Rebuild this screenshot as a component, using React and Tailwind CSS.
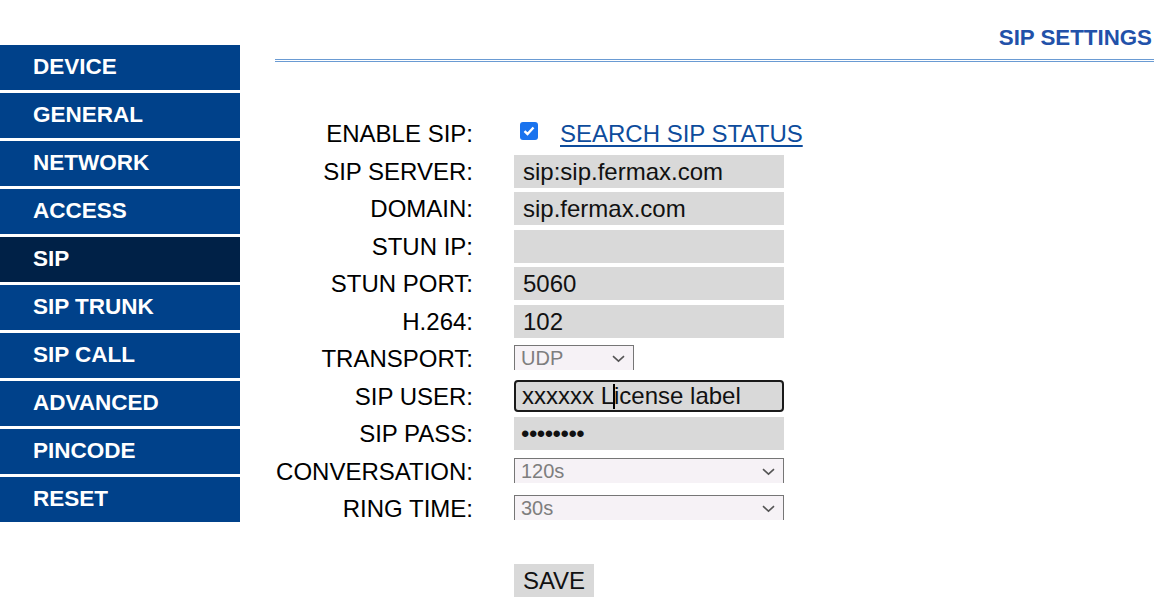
import React from "react";

const NAV = ["DEVICE", "GENERAL", "NETWORK", "ACCESS", "SIP", "SIP TRUNK", "SIP CALL", "ADVANCED", "PINCODE", "RESET"];

function Chevron() {
  return (
    <svg width="13" height="8" viewBox="0 0 13 8" className="absolute right-[8px] top-[9px]">
      <path d="M1 1.2 L6.5 6.2 L12 1.2" fill="none" stroke="#555" strokeWidth="1.6" />
    </svg>
  );
}

function FakeSelect({ value, w }) {
  return (
    <div className={`relative ${w} h-[25px] mt-[5px] self-start border-t border-l border-r border-[#767676] bg-[#f6f2f6] text-[#7e7e7e] text-[20px] leading-[24px] pl-[6px]`}>
      {value}
      <Chevron />
    </div>
  );
}

function Input({ value }) {
  return (
    <div className="w-[270px] h-[33px] bg-[#d9d9d9] text-[24px] leading-[33px] pl-[9px] text-[#111]">{value}</div>
  );
}

function Label({ children }) {
  return <div className="text-right text-[24px] leading-[27px] text-black whitespace-nowrap">{children}</div>;
}

export default function App() {
  const rows = [
    ["SIP SERVER:", <Input value="sip:sip.fermax.com" />],
    ["DOMAIN:", <Input value="sip.fermax.com" />],
    ["STUN IP:", <Input value="" />],
    ["STUN PORT:", <Input value="5060" />],
    ["H.264:", <Input value="102" />],
    ["TRANSPORT:", <FakeSelect value="UDP" w="w-[120px]" />],
    [
      "SIP USER:",
      <div className="w-[270px] h-[32px] bg-[#d9d9d9] border-2 border-[#1a1a1a] rounded-[4px] text-[24px] leading-[28px] pl-[6px] text-[#111] whitespace-nowrap">
        xxxxxx L<span className="inline-block w-[2px] h-[25px] bg-black align-middle mx-[-1px] relative top-[-1px]"></span>icense label
      </div>,
    ],
    [
      "SIP PASS:",
      <div className="w-[270px] h-[33px] bg-[#d9d9d9] text-[24px] leading-[33px] pl-[7px] text-[#111] tracking-[-0.5px]">••••••••</div>,
    ],
    ["CONVERSATION:", <FakeSelect value="120s" w="w-[270px]" />],
    ["RING TIME:", <FakeSelect value="30s" w="w-[270px]" />],
  ];

  return (
    <div className="flex w-[1166px] h-[614px] bg-white font-['Liberation_Sans',Arial,sans-serif] overflow-hidden">
      <nav className="w-[240px] shrink-0 mt-[45px] flex flex-col gap-[3px]">
        {NAV.map((n) => (
          <div
            key={n}
            className={`h-[45px] flex items-center pl-[33px] pb-[1px] text-white font-bold text-[22.5px] ${n === "SIP" ? "bg-[#002147]" : "bg-[#00418a]"}`}
          >
            {n}
          </div>
        ))}
      </nav>
      <main className="ml-[35px] w-[879px] flex flex-col">
        <div className="pt-[25px] pr-[2px] text-right text-[22.3px] leading-[25px] font-bold text-[#2251a9]">SIP SETTINGS</div>
        <div className="mt-[9px] h-[3px] border-t border-b border-[#6a9bd3]"></div>
        <div className="mt-[53px] grid grid-cols-[198px_1fr] gap-x-[41px] auto-rows-[37.5px] items-center">
          <Label>ENABLE SIP:</Label>
          <div className="flex items-center">
            <div className="ml-[6px] w-[18px] h-[18px] rounded-[3px] bg-[#1a73ee] flex items-center justify-center relative top-[-3px]">
              <svg width="12" height="10" viewBox="0 0 12 10">
                <path d="M1.5 5.2 L4.5 8 L10.5 1.5" fill="none" stroke="white" strokeWidth="2.4" />
              </svg>
            </div>
            <span className="ml-[22px] text-[24px] leading-[27px] text-[#0e4c9c] underline underline-offset-[3px] decoration-[2px]">SEARCH SIP STATUS</span>
          </div>
          {rows.map(([l, c], i) => (
            <React.Fragment key={i}>
              <Label>{l}</Label>
              {c}
            </React.Fragment>
          ))}
          <div></div>
          <div className="self-start mt-[36px] w-[80px] h-[33px] bg-[#d9d9d9] text-[24px] leading-[33px] text-center text-[#111]">SAVE</div>
        </div>
      </main>
    </div>
  );
}
